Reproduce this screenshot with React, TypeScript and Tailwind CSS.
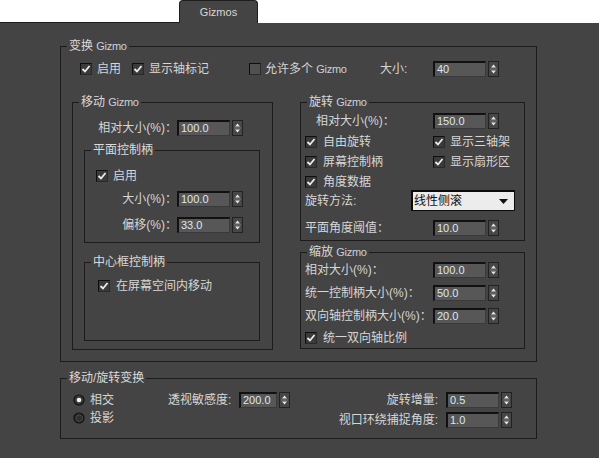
import React from "react";
import clsx from "clsx";

const G = ({ children }: { children: React.ReactNode }) => (
  <span className="text-[11px] text-[#c8d1dc] tracking-[-0.3px]">{children}</span>
);

function Check({ on = true }: { on?: boolean }) {
  return (
    <div
      className={clsx(
        "w-[12px] h-[12px] shrink-0 border border-t-[#0e0e0e] border-l-[#0e0e0e] border-b-[#2a2a2a] border-r-[#2a2a2a] flex items-center justify-center",
        on ? "bg-[#3a3a3a]" : "bg-[#505050]"
      )}
    >
      {on && (
        <svg width="10" height="10" viewBox="0 0 10 10">
          <path d="M1.5 5 L4 7.5 L8.5 2" stroke="#ececec" strokeWidth="1.8" fill="none" />
        </svg>
      )}
    </div>
  );
}

function Radio({ on }: { on: boolean }) {
  return (
    <svg width="12" height="12" viewBox="0 0 12 12" className="shrink-0">
      <circle cx="6" cy="6" r="5" fill={on ? "#3a3a3a" : "#2f2f2f"} stroke="#111" strokeWidth="1.2" />
      {on ? <circle cx="6" cy="6" r="2.3" fill="#f0f0f0" /> : <circle cx="6.3" cy="6.3" r="3.3" fill="none" stroke="#4a4a4a" strokeWidth="0.8" />}
    </svg>
  );
}

function Spin({ v, w = "w-[53px]" }: { v: string; w?: string }) {
  return (
    <div className="flex items-center shrink-0">
      <div
        className={clsx(
          w,
          "h-[16px] bg-[#575757] border-t-2 border-l-2 border-t-[#111] border-l-[#111] border-b border-r border-b-[#3a3a3a] border-r-[#3a3a3a] pl-[2px] text-[11px] leading-[13px] text-[#dfe6ef] font-['Liberation_Sans',sans-serif]"
        )}
      >
        {v}
      </div>
      <div className="ml-[2px] w-[11px] h-[16px]">
        <svg width="11" height="16" viewBox="0 0 11 16">
          <rect x="0.5" y="0.5" width="10" height="15" fill="#474747" stroke="#222" />
          <path d="M3 6.5 L5.5 3.5 L8 6.5 Z" fill="#e6e6e6" />
          <line x1="2" y1="8" x2="9" y2="8" stroke="#7a7a7a" />
          <path d="M3 9.5 L5.5 12.5 L8 9.5 Z" fill="#e6e6e6" />
        </svg>
      </div>
    </div>
  );
}

function Group({
  label,
  className,
  children,
}: {
  label: React.ReactNode;
  className?: string;
  children?: React.ReactNode;
}) {
  return (
    <div className={clsx("relative border border-[#1c1c1c] shrink-0 flex flex-col", className)}>
      <div className="absolute left-[6px] top-[-8px] px-[2px] bg-[#444444] leading-[14px] whitespace-nowrap text-[#dadada]">
        {label}
      </div>
      {children}
    </div>
  );
}

export default function App() {
  return (
    <div className="w-[599px] h-[458px] bg-white flex flex-col overflow-hidden font-['Liberation_Sans','Noto_Sans_CJK_SC',sans-serif] text-[12px] leading-[14px] text-[#d6d6d6]">
      {/* tab strip */}
      <div className="flex h-[23px] shrink-0">
        <div className="w-[179px] h-full border-b border-[#1e1e1e]" />
        <div className="w-[79px] h-full bg-[#444444] border border-b-0 border-[#1e1e1e] rounded-t-[4px] flex items-center justify-center text-[11px] text-[#d8d8d8]">
          Gizmos
        </div>
        <div className="flex-1 h-full" />
      </div>

      {/* panel */}
      <div className="flex-1 bg-[#444444] pt-[23px] pl-[60px]">
        <Group label={<>变换 <G>Gizmo</G></>} className="w-[477px] h-[316px]">
          {/* row 1 */}
          <div className="mt-[14px] h-[16px] flex items-center pl-[19px]">
            <div className="w-[52px] flex items-center gap-[5px]">
              <Check />
              <span>启用</span>
            </div>
            <div className="w-[117px] flex items-center gap-[5px]">
              <Check />
              <span>显示轴标记</span>
            </div>
            <div className="w-[131px] flex items-center gap-[4px]">
              <Check on={false} />
              <span className="whitespace-nowrap">
                允许多个 <G>Gizmo</G>
              </span>
            </div>
            <div className="w-[53px]">大小:</div>
            <Spin v="40" />
          </div>

          {/* row 2 */}
          <div className="mt-[25px] flex pl-[11px]">
            {/* move gizmo */}
            <Group label={<>移动 <G>Gizmo</G></>} className="w-[201px] h-[248px]">
              <div className="mt-[17px] h-[16px] flex items-center">
                <div className="w-[104px] text-right">相对大小(%)：</div>
                <Spin v="100.0" />
              </div>
              <div className="mt-[14px] ml-[11px]">
                <Group label="平面控制柄" className="w-[176px] h-[93px]">
                  <div className="mt-[19px] pl-[11px] h-[12px] flex items-center gap-[5px]">
                    <Check />
                    <span>启用</span>
                  </div>
                  <div className="mt-[9px] h-[16px] flex items-center">
                    <div className="w-[92px] text-right">大小(%)：</div>
                    <Spin v="100.0" />
                  </div>
                  <div className="mt-[10px] h-[16px] flex items-center">
                    <div className="w-[92px] text-right">偏移(%)：</div>
                    <Spin v="33.0" />
                  </div>
                </Group>
              </div>
              <div className="mt-[19px] ml-[11px]">
                <Group label="中心框控制柄" className="w-[176px] h-[79px]">
                  <div className="mt-[17px] pl-[13px] h-[12px] flex items-center gap-[6px]">
                    <Check />
                    <span>在屏幕空间内移动</span>
                  </div>
                </Group>
              </div>
            </Group>

            {/* right column */}
            <div className="ml-[27px] flex flex-col">
              <Group label={<>旋转 <G>Gizmo</G></>} className="w-[225px] h-[139px]">
                <div className="mt-[10px] h-[16px] flex items-center">
                  <div className="w-[132px] pl-[15px]">相对大小(%)：</div>
                  <Spin v="150.0" />
                </div>
                <div className="mt-[7px] h-[12px] flex items-center pl-[4px]">
                  <div className="w-[128px] flex items-center gap-[6px]">
                    <Check />
                    <span>自由旋转</span>
                  </div>
                  <div className="flex items-center gap-[5px]">
                    <Check />
                    <span>显示三轴架</span>
                  </div>
                </div>
                <div className="mt-[8px] h-[12px] flex items-center pl-[4px]">
                  <div className="w-[128px] flex items-center gap-[6px]">
                    <Check />
                    <span>屏幕控制柄</span>
                  </div>
                  <div className="flex items-center gap-[5px]">
                    <Check />
                    <span>显示扇形区</span>
                  </div>
                </div>
                <div className="mt-[8px] h-[12px] flex items-center pl-[4px]">
                  <div className="flex items-center gap-[6px]">
                    <Check />
                    <span>角度数据</span>
                  </div>
                </div>
                <div className="mt-[2px] h-[21px] flex items-center pl-[4px]">
                  <div className="w-[106px]">旋转方法:</div>
                  <div className="w-[104px] h-[21px] bg-[#ececec] border-t-2 border-l-2 border-b border-r border-[#0c0c0c] flex items-center pl-[1px] pr-[6px] text-[#111]">
                    <span className="flex-1">线性侧滚</span>
                    <svg width="9" height="5" viewBox="0 0 9 5">
                      <path d="M0 0 L9 0 L4.5 5 Z" fill="#111" />
                    </svg>
                  </div>
                </div>
                <div className="mt-[9px] h-[16px] flex items-center pl-[4px]">
                  <div className="w-[128px]">平面角度阈值：</div>
                  <Spin v="10.0" />
                </div>
              </Group>

              <div className="mt-[11px]">
                <Group label={<>缩放 <G>Gizmo</G></>} className="w-[225px] h-[97px]">
                  <div className="mt-[9px] h-[16px] flex items-center pl-[4px]">
                    <div className="w-[128px]">相对大小(%)：</div>
                    <Spin v="100.0" />
                  </div>
                  <div className="mt-[7px] h-[16px] flex items-center pl-[4px]">
                    <div className="w-[128px]">统一控制柄大小(%)：</div>
                    <Spin v="50.0" />
                  </div>
                  <div className="mt-[7px] h-[16px] flex items-center pl-[4px]">
                    <div className="w-[128px] whitespace-nowrap">双向轴控制柄大小(%)：</div>
                    <Spin v="20.0" />
                  </div>
                  <div className="mt-[8px] h-[12px] flex items-center pl-[4px] gap-[6px]">
                    <Check />
                    <span>统一双向轴比例</span>
                  </div>
                </Group>
              </div>
            </div>
          </div>
        </Group>

        {/* bottom group */}
        <div className="mt-[16px]">
          <Group label="移动/旋转变换" className="w-[477px] h-[61px]">
            <div className="flex">
              <div className="w-[107px] pl-[12px] flex flex-col">
                <div className="mt-[15px] h-[12px] flex items-center gap-[5px]">
                  <Radio on />
                  <span>相交</span>
                </div>
                <div className="mt-[6px] h-[12px] flex items-center gap-[5px]">
                  <Radio on={false} />
                  <span>投影</span>
                </div>
              </div>
              <div className="mt-[13px] h-[16px] flex items-center">
                <div className="w-[71px]">透视敏感度:</div>
                <Spin v="200.0" w="w-[38px]" />
              </div>
              <div className="flex flex-col">
                <div className="mt-[13px] h-[16px] flex items-center">
                  <div className="w-[156px] text-right pr-[8px]">旋转增量:</div>
                  <Spin v="0.5" />
                </div>
                <div className="mt-[4px] h-[16px] flex items-center">
                  <div className="w-[156px] text-right pr-[8px]">视口环绕捕捉角度:</div>
                  <Spin v="1.0" />
                </div>
              </div>
            </div>
          </Group>
        </div>
      </div>
    </div>
  );
}
